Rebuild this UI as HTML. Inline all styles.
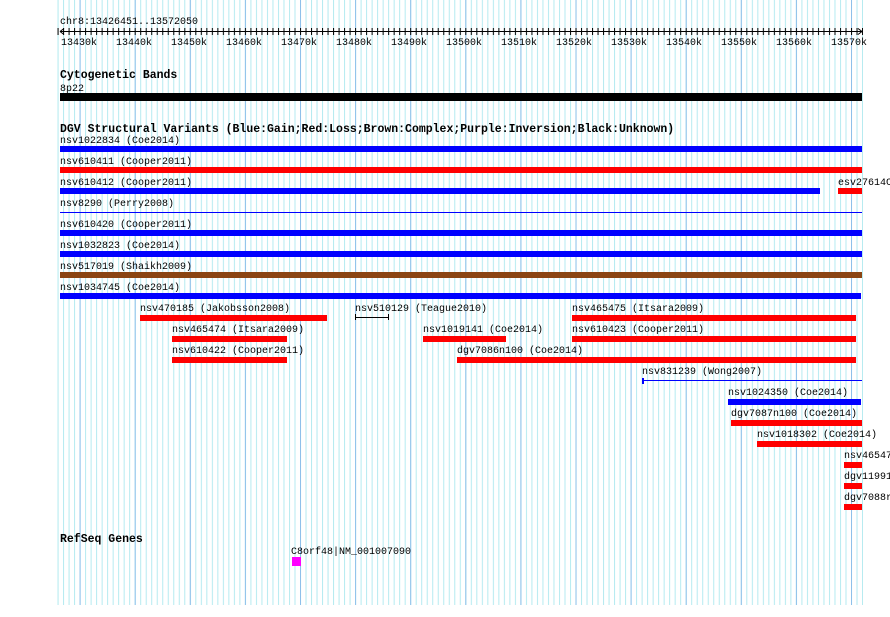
<!DOCTYPE html>
<html><head><style>
html,body{margin:0;padding:0;background:#fff;width:890px;height:617px;overflow:hidden}
svg text{font-family:"Liberation Mono",monospace;font-size:10px;fill:#000}
svg text.b{font-weight:bold;font-size:11.5px}
</style></head><body>
<svg width="890" height="617" xmlns="http://www.w3.org/2000/svg">
<defs>
<pattern id="mi" patternUnits="userSpaceOnUse" x="79.6" y="0" width="5.51" height="10"><rect x="0" y="0" width="1" height="10" fill="#b4eaf0"/></pattern>
<pattern id="ma" patternUnits="userSpaceOnUse" x="79.6" y="0" width="55.1" height="10"><rect x="0" y="0" width="1" height="10" fill="#8ec0ea"/></pattern>
</defs>
<rect x="57" y="0" width="806" height="605" fill="url(#mi)"/>
<rect x="57" y="0" width="806" height="605" fill="url(#ma)"/>
<text x="60" y="24">chr8:13426451..13572050</text>
<line x1="60" y1="31.5" x2="862" y2="31.5" stroke="#000"/>
<path d="M60 31.5 l4 -3 M60 31.5 l4 3 M862 31.5 l-4 -3 M862 31.5 l-4 3" stroke="#000"/>
<rect x="57" y="28" width="806" height="7" fill="url(#mi)" style="filter:brightness(0)"/>
<g>
<text x="61" y="45">13430k</text><text x="116" y="45">13440k</text><text x="171" y="45">13450k</text><text x="226" y="45">13460k</text><text x="281" y="45">13470k</text><text x="336" y="45">13480k</text><text x="391" y="45">13490k</text><text x="446" y="45">13500k</text><text x="501" y="45">13510k</text><text x="556" y="45">13520k</text><text x="611" y="45">13530k</text><text x="666" y="45">13540k</text><text x="721" y="45">13550k</text><text x="776" y="45">13560k</text><text x="831" y="45">13570k</text>
</g>
<text class="b" x="60" y="78">Cytogenetic Bands</text>
<text x="60" y="91">8p22</text>
<rect x="60" y="93" width="802" height="8" fill="#000"/>
<text class="b" x="60" y="132">DGV Structural Variants (Blue:Gain;Red:Loss;Brown:Complex;Purple:Inversion;Black:Unknown)</text>
<text x="60" y="143">nsv1022834 (Coe2014)</text><rect x="60" y="146" width="802" height="6" fill="#0000ff"/>
<text x="60" y="164">nsv610411 (Cooper2011)</text><rect x="60" y="167" width="802" height="6" fill="#ff0000"/>
<text x="60" y="185">nsv610412 (Cooper2011)</text><rect x="60" y="188" width="760" height="6" fill="#0000ff"/>
<text x="838" y="185">esv27614C</text><rect x="838" y="188" width="24" height="6" fill="#ff0000"/>
<text x="60" y="206">nsv8290 (Perry2008)</text><rect x="60" y="212" width="802" height="1" fill="#0000ff"/>
<text x="60" y="227">nsv610420 (Cooper2011)</text><rect x="60" y="230" width="802" height="6" fill="#0000ff"/>
<text x="60" y="248">nsv1032823 (Coe2014)</text><rect x="60" y="251" width="802" height="6" fill="#0000ff"/>
<text x="60" y="269">nsv517019 (Shaikh2009)</text><rect x="60" y="272" width="802" height="6" fill="#8b4513"/>
<text x="60" y="290">nsv1034745 (Coe2014)</text><rect x="60" y="293" width="801" height="6" fill="#0000ff"/>
<text x="140" y="311">nsv470185 (Jakobsson2008)</text><rect x="140" y="315" width="187" height="6" fill="#ff0000"/>
<text x="355" y="311">nsv510129 (Teague2010)</text><path d="M355.5 314v6M388.5 314v6M355 317.5h34" stroke="#000"/>
<text x="572" y="311">nsv465475 (Itsara2009)</text><rect x="572" y="315" width="284" height="6" fill="#ff0000"/>
<text x="172" y="332">nsv465474 (Itsara2009)</text><rect x="172" y="336" width="115" height="6" fill="#ff0000"/>
<text x="423" y="332">nsv1019141 (Coe2014)</text><rect x="423" y="336" width="83" height="6" fill="#ff0000"/>
<text x="572" y="332">nsv610423 (Cooper2011)</text><rect x="572" y="336" width="284" height="6" fill="#ff0000"/>
<text x="172" y="353">nsv610422 (Cooper2011)</text><rect x="172" y="357" width="115" height="6" fill="#ff0000"/>
<text x="457" y="353">dgv7086n100 (Coe2014)</text><rect x="457" y="357" width="399" height="6" fill="#ff0000"/>
<text x="642" y="374">nsv831239 (Wong2007)</text><rect x="642" y="380" width="220" height="1" fill="#0000ff"/><rect x="642" y="378" width="2" height="6" fill="#0000ff"/>
<text x="728" y="395">nsv1024350 (Coe2014)</text><rect x="728" y="399" width="133" height="6" fill="#0000ff"/>
<text x="731" y="416">dgv7087n100 (Coe2014)</text><rect x="731" y="420" width="131" height="6" fill="#ff0000"/>
<text x="757" y="437">nsv1018302 (Coe2014)</text><rect x="757" y="441" width="105" height="6" fill="#ff0000"/>
<text x="844" y="458">nsv46547</text><rect x="844" y="462" width="18" height="6" fill="#ff0000"/>
<text x="844" y="479">dgv11991</text><rect x="844" y="483" width="18" height="6" fill="#ff0000"/>
<text x="844" y="500">dgv7088r</text><rect x="844" y="504" width="18" height="6" fill="#ff0000"/>
<text class="b" x="60" y="542">RefSeq Genes</text>
<text x="291" y="554">C8orf48|NM_001007090</text>
<rect x="292" y="557" width="9" height="9" fill="#ff00ff"/>
</svg>
</body></html>
